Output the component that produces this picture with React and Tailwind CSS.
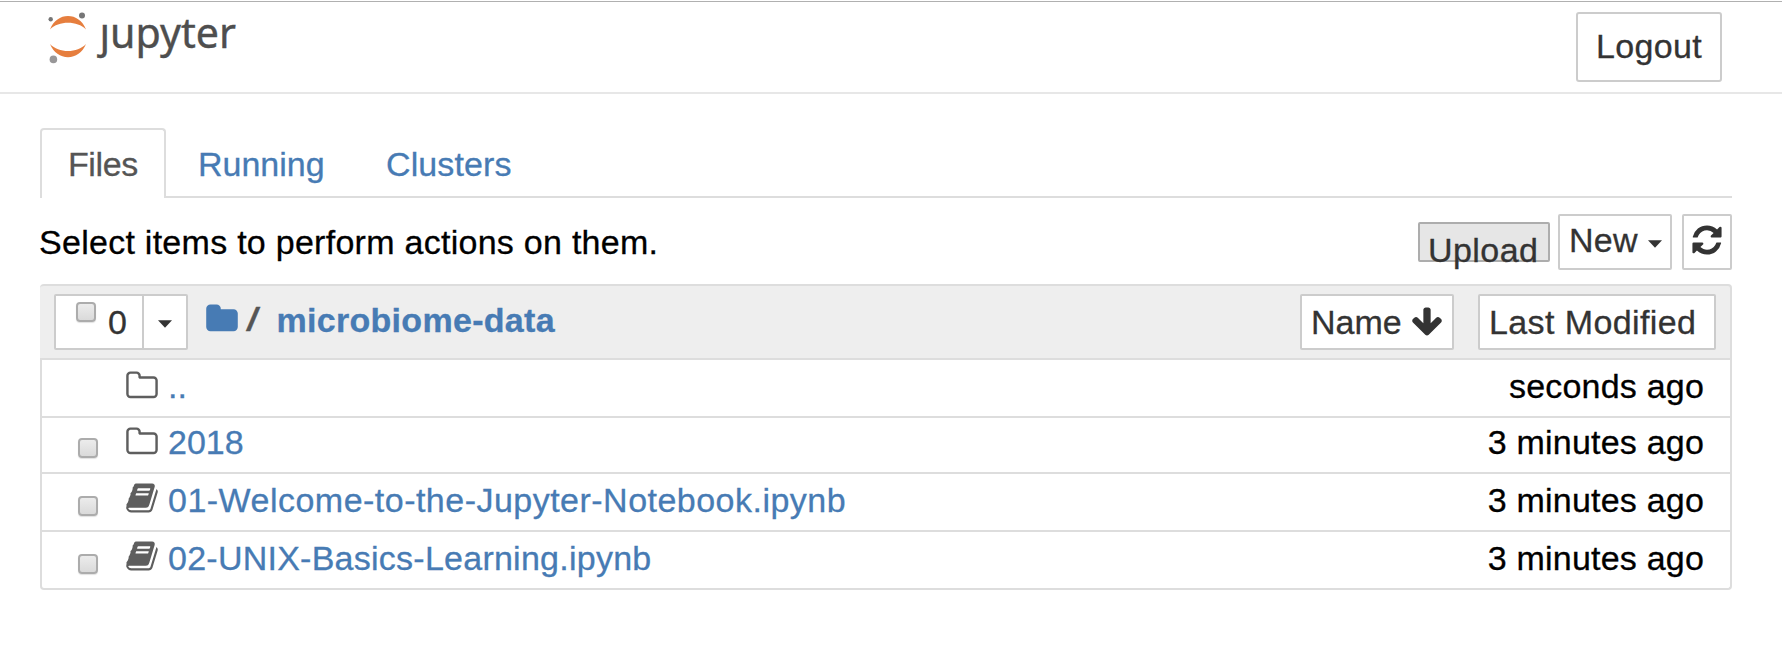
const ICONS = {
  folderOpen:
    'M1600 1312v-704q0-40-28-68t-68-28h-704q-40 0-68-28t-28-68v-64q0-40-28-68t-68-28h-320q-40 0-68 28t-28 68v960q0 40 28 68t68 28h1216q40 0 68-28t28-68zm128-704v704q0 92-66 158t-158 66h-1216q-92 0-158-66t-66-158v-960q0-92 66-158t158-66h320q92 0 158 66t66 158v32h672q92 0 158 66t66 158z',
  folder:
    'M1728 608v704q0 92-66 158t-158 66h-1216q-92 0-158-66t-66-158v-960q0-92 66-158t158-66h320q92 0 158 66t66 158v32h672q92 0 158 66t66 158z',
  book:
    'M1703 478q40 57 18 129l-275 906q-19 64-76.5 107.5t-122.5 43.5h-923q-77 0-148.5-53.5t-99.5-131.5q-24-67-2-127 0-4 3-27t4-37q1-8-3-21.5t-3-19.5q2-11 8-21t16.5-23.5 16.5-23.5q23-38 45-91.5t30-91.5q3-10 .5-30t-.5-28q3-11 17-28t17-23q21-36 42-92t25-90q1-9-2.5-32t.5-28q4-13 22-30.5t22-22.5q19-26 42.5-84.5t27.5-96.5q1-8-3-25.5t-2-26.5q2-8 9-18t18-23 17-21q8-12 16.5-30.5t15-35 16-36 19.5-32 26.5-23.5 36-11.5 47.5 5.5l-1 3q38-9 51-9h761q74 0 114 56t18 130l-274 906q-36 119-71.5 153.5t-128.5 34.5h-869q-27 0-38 15-11 16-1 43 24 70 144 70h923q29 0 56-15.5t35-41.5l300-987q7-22 5-57 38 15 59 43zm-1064 2q-4 13 2 22.5t20 9.5h608q13 0 25.5-9.5t16.5-22.5l21-64q4-13-2-22.5t-20-9.5h-608q-13 0-25.5 9.5t-16.5 22.5zm-83 256q-4 13 2 22.5t20 9.5h608q13 0 25.5-9.5t16.5-22.5l21-64q4-13-2-22.5t-20-9.5h-608q-13 0-25.5 9.5t-16.5 22.5z',
  refresh:
    'M1639 1056q0 5-1 7-64 268-268 434.5t-478 166.5q-146 0-282.5-55t-243.5-157l-129 129q-19 19-45 19t-45-19-19-45v-448q0-26 19-45t45-19h448q26 0 45 19t19 45-19 45l-137 137q71 66 161 102t187 36q134 0 250-65t186-179q11-17 53-117 8-23 30-23h192q13 0 22.5 9.5t9.5 22.5zm25-800v448q0 26-19 45t-45 19h-448q-26 0-45-19t-19-45 19-45l138-138q-148-137-349-137-134 0-250 65t-186 179q-11 17-53 117-8 23-30 23h-199q-13 0-22.5-9.5t-9.5-22.5v-7q65-268 270-434.5t480-166.5q146 0 284 55.5t245 156.5l130-129q19-19 45-19t45 19 19 45z',
  arrowDown:
    'M1675 832q0 53-37 90l-651 652q-39 37-91 37-53 0-90-37l-651-652q-38-36-38-90 0-53 38-91l74-75q39-37 91-37 53 0 90 37l294 294v-704q0-52 38-90t90-38h128q52 0 90 38t38 90v704l294-294q37-37 90-37 52 0 91 37l75 75q37 39 37 91z',
};

function Icon({ name, className = '' }) {
  return (
    <svg viewBox="0 0 1792 1792" fill="currentColor" className={`size-[34px] shrink-0 ${className}`}>
      <path d={ICONS[name]} />
    </svg>
  );
}

function Caret({ className = '' }) {
  return (
    <svg viewBox="0 0 14 8" fill="currentColor" className={`h-2 w-3.5 shrink-0 ${className}`}>
      <path d="M0 0.3H14L7 7.8Z" />
    </svg>
  );
}

function Checkbox({ className = '' }) {
  return (
    <span
      role="checkbox"
      aria-checked="false"
      className={`size-5 shrink-0 rounded-[4px] border-2 border-[#acacac] bg-linear-to-b from-[#ececec] to-[#dadada] shadow-[0_1px_1px_rgba(0,0,0,0.12)] ${className}`}
    />
  );
}

function Logo() {
  return (
    <svg width="200" height="76" viewBox="40 5 200 76" className="overflow-visible" aria-label="jupyter">
      <path d="M50 29.5C53.500 20.500 60.500 16 68 16S82.500 20.500 86 29.500C81.500 25 75 22.800 68 22.800S54.500 25 50 29.500Z" fill="#e67e3e" />
      <path d="M50 44C53.500 52.700 60.500 57.200 68 57.200S82.500 52.700 86 44C81.500 48.700 75 51 68 51S54.500 48.700 50 44Z" fill="#e67e3e" />
      <circle cx="82" cy="15.400" r="3" fill="#767677" />
      <circle cx="50.700" cy="19.300" r="2.200" fill="#757575" />
      <circle cx="53.400" cy="59.400" r="3.800" fill="#989798" />
      <text x="99.500" y="48" fontSize="41.500" fill="#4e4e4e" stroke="#4e4e4e" strokeWidth="0.4" textLength="136.500" lengthAdjust="spacingAndGlyphs" fontFamily="'Noto Sans', sans-serif">
        ȷupyter
      </text>
    </svg>
  );
}

const FILES = [
  { name: '..', icon: 'folderOpen', time: 'seconds ago', row: 'h-[58px] leading-[52px]', iconClass: 'mt-[8.500px]' },
  { name: '2018', icon: 'folderOpen', time: '3 minutes ago', row: 'h-14 leading-[48px]', iconClass: 'mt-[6.500px]', check: 'mt-5' },
  { name: '01-Welcome-to-the-Jupyter-Notebook.ipynb', icon: 'book', time: '3 minutes ago', row: 'h-[58px] leading-[52px]', iconClass: 'mt-[6.500px]', check: 'mt-[22px]', label: 'tracking-[0.48px]' },
  { name: '02-UNIX-Basics-Learning.ipynb', icon: 'book', time: '3 minutes ago', row: 'h-[58px] leading-[52px] rounded-b-[4px]', iconClass: 'mt-[6.500px]', check: 'mt-[22px]', label: 'tracking-[0.25px]' },
];

export default function App() {
  return (
    <div className="flex h-[670px] w-[1782px] flex-col overflow-hidden bg-white pt-px font-['Liberation_Sans',Arial,sans-serif] text-[34px] whitespace-nowrap text-black [-webkit-text-stroke:0.3px_currentColor]">
      <header className="flex h-[93px] shrink-0 items-start justify-between border-t border-b-2 border-t-[#b0b0b0] border-b-[#e7e7e7] pr-[60px] pl-10">
        <div className="mt-[3px]">
          <Logo />
        </div>
        <button className="mt-2.5 flex h-[70px] w-[146px] items-center justify-center rounded-[3px] border-2 border-[#ccc] pb-px tracking-[0.3px] text-[#333]">
          Logout
        </button>
      </header>

      <main className="flex flex-col pr-[50px] pl-10">
        <nav className="mt-[34px] flex h-[70px] border-b-2 border-[#ddd] leading-[72px] text-[#477bb4]">
          <a className="h-[70px] w-[126px] rounded-t-[4px] border-2 border-b-0 border-[#ddd] bg-white pl-[26px] leading-[68px] tracking-[-0.4px] text-[#555]">Files</a>
          <a className="ml-8 w-[186px]">Running</a>
          <a className="ml-[2px] tracking-[0.1px]">Clusters</a>
        </nav>

        <div className="mt-4 mb-3.5 flex h-14 items-start leading-[56px]">
          <span className="-ml-px flex-1 tracking-[0.27px]">Select items to perform actions on them.</span>
          <button className="mt-2 h-10 w-[132px] rounded-[2px] border-2 border-[#adadad] bg-[#e6e6e6] pl-2 text-left leading-[52px] tracking-[0.45px] text-[#333]">
            Upload
          </button>
          <button className="ml-2 flex h-14 w-[114px] items-center rounded-[2px] border-2 border-[#ccc] pl-[9px] leading-[50px] text-[#333]">
            <span className="w-[79px] pb-1 text-left tracking-[0.3px]">New</span>
            <Caret className="mt-1" />
          </button>
          <button className="ml-2.5 flex h-14 w-[50px] items-center justify-center rounded-[2px] border-2 border-[#ccc] text-[#333]">
            <Icon name="refresh" className="-mt-1" />
          </button>
        </div>

        <section className="flex flex-col">
          <div className="flex h-[76px] items-start rounded-t-[4px] border-t-2 border-r-2 border-b-2 border-[#ddd] bg-[#eee] pt-2 pl-3.5 text-[#333]">
            <div className="flex h-14 w-[134px] rounded-[2px] border-2 border-[#ccc] bg-white leading-[53px]">
              <div className="flex w-[88px] border-r-2 border-[#ccc] pl-5">
                <Checkbox className="mt-1.5" />
                <span className="ml-3">0</span>
              </div>
              <Caret className="mt-6 ml-[14px]" />
            </div>
            <Icon name="folder" className="mt-2 ml-[17px] text-[#477bb4]" />
            <span className="ml-[7px] origin-left scale-x-150 leading-[51px] text-[#555]">/</span>
            <a className="ml-[21px] flex-1 leading-[52px] font-bold tracking-[0.3px] text-[#477bb4]">microbiome-data</a>
            <button className="flex h-14 w-[154px] items-center rounded-[2px] border-2 border-[#ccc] bg-white pl-[9px] leading-[52px]">
              <span className="w-[99px] text-left">Name</span>
              <Icon name="arrowDown" />
            </button>
            <button className="mr-3.5 ml-6 h-14 w-[238px] rounded-[2px] border-2 border-[#ccc] bg-white pl-[9px] text-left leading-[52px] tracking-[0.4px]">
              Last Modified
            </button>
          </div>

          {FILES.map((file) => (
            <div key={file.name} className={`flex items-start border-x-2 border-b-2 border-[#ddd] pr-[26px] pl-9 ${file.row}`}>
              <div className="flex w-[47px]">{file.check && <Checkbox className={file.check} />}</div>
              <Icon name={file.icon} className={`text-[#5e5e5e] ${file.iconClass}`} />
              <a className={`ml-[9px] flex-1 text-[#477bb4] ${file.label ?? ''}`}>{file.name}</a>
              <span className="tracking-[0.2px]">{file.time}</span>
            </div>
          ))}
        </section>
      </main>
    </div>
  );
}
